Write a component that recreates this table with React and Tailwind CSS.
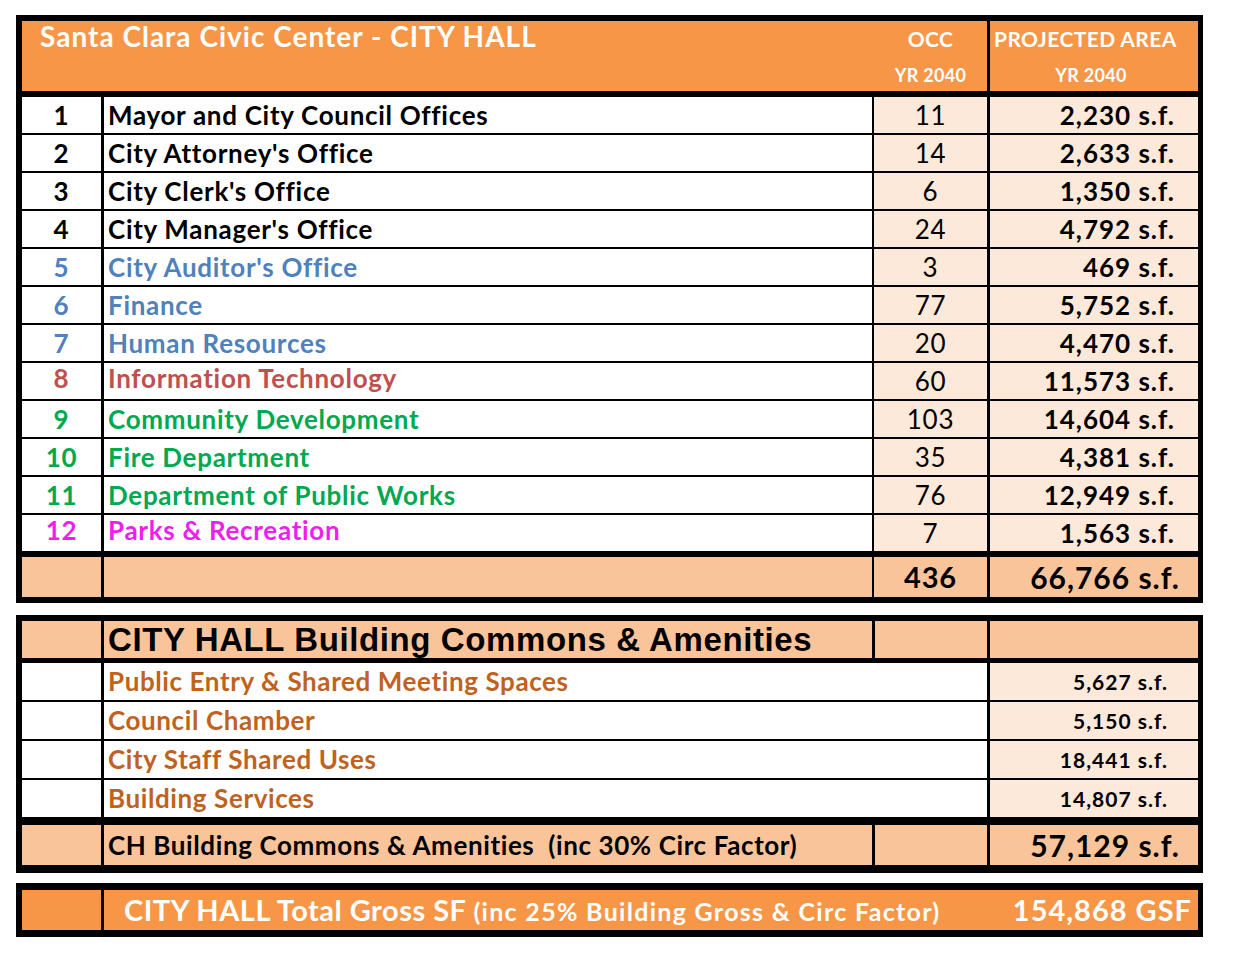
import React from "react";

const rows = [
  { n: 1, name: "Mayor and City Council Offices", occ: "11", area: "2,230", c: "text-black" },
  { n: 2, name: "City Attorney's Office", occ: "14", area: "2,633", c: "text-black" },
  { n: 3, name: "City Clerk's Office", occ: "6", area: "1,350", c: "text-black" },
  { n: 4, name: "City Manager's Office", occ: "24", area: "4,792", c: "text-black" },
  { n: 5, name: "City Auditor's Office", occ: "3", area: "469", c: "text-[#4F81BD]" },
  { n: 6, name: "Finance", occ: "77", area: "5,752", c: "text-[#4F81BD]" },
  { n: 7, name: "Human Resources", occ: "20", area: "4,470", c: "text-[#4F81BD]" },
  { n: 8, name: "Information Technology", occ: "60", area: "11,573", c: "text-[#C0504D]", up: true },
  { n: 9, name: "Community Development", occ: "103", area: "14,604", c: "text-[#00A84F]" },
  { n: 10, name: "Fire Department", occ: "35", area: "4,381", c: "text-[#00A84F]" },
  { n: 11, name: "Department of Public Works", occ: "76", area: "12,949", c: "text-[#00A84F]" },
  { n: 12, name: "Parks & Recreation", occ: "7", area: "1,563", c: "text-[#EE1FEE]", up: true },
];

const commons = [
  { name: "Public Entry & Shared Meeting Spaces", area: "5,627" },
  { name: "Council Chamber", area: "5,150" },
  { name: "City Staff Shared Uses", area: "18,441" },
  { name: "Building Services", area: "14,807" },
];

export default function App() {
  return (
    <div className="w-[1235px] h-[958px] bg-white pt-[15px] pl-[16px] font-['Lato',sans-serif]">
      {/* Table 1 */}
      <div className="w-[1187px] bg-black pt-[6px] pb-[6px] pl-[6px] pr-[5px]">
        <div className="flex h-[70px]">
          <div className="flex w-[965px] bg-[#F79646] text-white font-bold">
            <div className="w-[852px] pl-[18px] pt-[0px] text-[28px] leading-[30px] tracking-[1px] whitespace-nowrap">
              Santa Clara Civic Center - CITY HALL
            </div>
            <div className="w-[113px] flex flex-col items-center pt-[5px]">
              <div className="text-[21px] leading-[26px] tracking-[0.3px]">OCC</div>
              <div className="mt-[13px] text-[18px] leading-[20px] tracking-[0.3px]">YR 2040</div>
            </div>
          </div>
          <div className="ml-[3px] w-[208px] bg-[#F79646] text-white font-bold flex flex-col items-center pt-[5px]">
            <div className="self-start pl-[4px] text-[21px] leading-[26px] tracking-[0.4px] whitespace-nowrap">PROJECTED AREA</div>
            <div className="mt-[13px] pr-[6px] text-[18px] leading-[20px] tracking-[0.3px]">YR 2040</div>
          </div>
        </div>

        <div className="mt-[6px] flex flex-col gap-[2px]">
          {rows.map((r) => (
            <div
              key={r.n}
              className={`flex h-[36px] text-[26px] tracking-[0.7px] ${r.up ? "leading-[31px]" : "leading-[36px]"}`}
            >
              <div className={`w-[79px] bg-white text-center font-bold ${r.c}`}>{r.n}</div>
              <div className={`ml-[3px] w-[768px] bg-white pl-[4px] font-bold whitespace-nowrap ${r.c}`}>{r.name}</div>
              <div className="ml-[2px] w-[113px] bg-[#FDE9D9] text-center text-black leading-[36px]">{r.occ}</div>
              <div className="ml-[3px] w-[208px] bg-[#FDE9D9] text-right pr-[23px] font-bold text-black whitespace-nowrap tracking-[1px] leading-[36px]">
                {r.area} s.f.
              </div>
            </div>
          ))}
        </div>

        <div className="mt-[6px] flex h-[40px] leading-[40px] font-bold text-black">
          <div className="w-[79px] bg-[#FAC49A]"></div>
          <div className="ml-[3px] w-[768px] bg-[#FAC49A]"></div>
          <div className="ml-[2px] w-[113px] bg-[#FAC49A] text-center text-[29px] tracking-[0.8px]">436</div>
          <div className="ml-[3px] w-[208px] bg-[#FAC49A] text-right pr-[18px] text-[30px] tracking-[1px] whitespace-nowrap">66,766 s.f.</div>
        </div>
      </div>

      {/* Table 2 */}
      <div className="mt-[12px] w-[1187px] bg-black pt-[6px] pb-[8px] pl-[6px] pr-[5px]">
        <div className="flex h-[37px]">
          <div className="w-[79px] bg-[#FAC49A]"></div>
          <div className="ml-[3px] w-[768px] bg-[#FAC49A] pl-[4px] font-['Liberation_Sans',Arial,sans-serif] font-bold text-[33px] leading-[37px] tracking-[0.6px] text-black whitespace-nowrap">
            CITY HALL Building Commons &amp; Amenities
          </div>
          <div className="ml-[3px] w-[112px] bg-[#FAC49A]"></div>
          <div className="ml-[3px] w-[208px] bg-[#FAC49A]"></div>
        </div>

        <div className="mt-[5px] flex flex-col gap-[2px]">
          {commons.map((r) => (
            <div key={r.name} className="flex h-[37px]">
              <div className="w-[79px] bg-white"></div>
              <div className="ml-[3px] w-[883px] bg-white pl-[4px] font-bold text-[26px] leading-[37px] tracking-[0.6px] text-[#C0621E] whitespace-nowrap">
                {r.name}
              </div>
              <div className="ml-[3px] w-[208px] bg-[#FDE9D9] text-right pr-[30px] font-bold text-[21px] leading-[37px] tracking-[1px] text-black whitespace-nowrap">
                {r.area} s.f.
              </div>
            </div>
          ))}
        </div>

        <div className="mt-[8px] flex h-[40px] leading-[40px] font-bold text-black">
          <div className="w-[79px] bg-[#FAC49A]"></div>
          <div className="ml-[3px] w-[768px] bg-[#FAC49A] pl-[4px] text-[26px] tracking-[0.6px] whitespace-pre">
            {"CH Building Commons & Amenities  (inc 30% Circ Factor)"}
          </div>
          <div className="ml-[3px] w-[112px] bg-[#FAC49A]"></div>
          <div className="ml-[3px] w-[208px] bg-[#FAC49A] text-right pr-[18px] text-[30px] tracking-[1px] whitespace-nowrap">57,129 s.f.</div>
        </div>
      </div>

      {/* Table 3 */}
      <div className="mt-[10px] w-[1187px] bg-black py-[7px] pl-[6px] pr-[5px]">
        <div className="flex h-[40px] leading-[40px] font-bold text-white">
          <div className="w-[79px] bg-[#F79646]"></div>
          <div className="ml-[3px] w-[1094px] bg-[#F79646] flex justify-between pl-[20px] pr-[6px] whitespace-nowrap">
            <div>
              <span className="text-[29px] tracking-[0.5px]">CITY HALL Total Gross SF </span>
              <span className="text-[25px] tracking-[1.3px]">(inc 25% Building Gross &amp; Circ Factor)</span>
            </div>
            <div className="text-[29px] tracking-[1px]">154,868 GSF</div>
          </div>
        </div>
      </div>
    </div>
  );
}
